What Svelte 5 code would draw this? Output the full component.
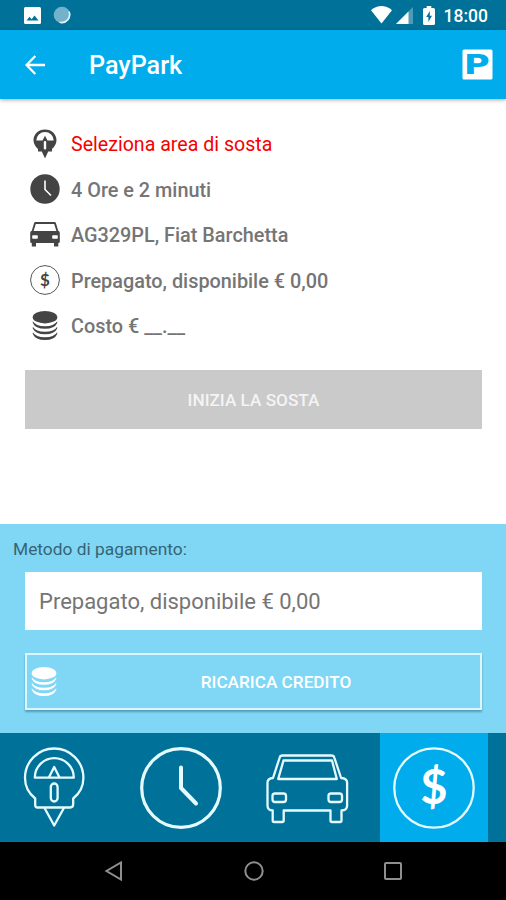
<script lang="ts">
	type Icon = 'meter' | 'clock' | 'car' | 'dollar' | 'coins';

	const rows: { icon: Icon; text: string; alert?: boolean }[] = [
		{ icon: 'meter', text: 'Seleziona area di sosta', alert: true },
		{ icon: 'clock', text: '4 Ore e 2 minuti' },
		{ icon: 'car', text: 'AG329PL, Fiat Barchetta' },
		{ icon: 'dollar', text: 'Prepagato, disponibile € 0,00' },
		{ icon: 'coins', text: 'Costo € __.__' }
	];

	const tabs: { icon: Icon; label: string }[] = [
		{ icon: 'meter', label: 'Area' },
		{ icon: 'clock', label: 'Durata' },
		{ icon: 'car', label: 'Veicolo' },
		{ icon: 'dollar', label: 'Pagamento' }
	];

	let current = $state<Icon>('dollar');
</script>

{#snippet coins()}
	<svg width="26" height="32" viewBox="0 0 26 32" aria-hidden="true">
		<ellipse cx="13" cy="7.200" rx="12.300" ry="6.200" />
		<path d="M.8 11.200q3 5 12.200 5t12.200-5v1.800q-2.600 5.800-12.200 5.800t-12.200-5.800z" />
		<path d="M.8 16.700q3 5 12.200 5t12.200-5v1.800q-2.600 5.800-12.200 5.800t-12.200-5.800z" />
		<path d="M.8 22.200q3 5 12.200 5t12.200-5v1.800q-2.600 6-12.200 6t-12.200-6z" />
	</svg>
{/snippet}

{#snippet rowIcon(name: Icon)}
	{#if name === 'meter'}
		<svg width="30" height="32" viewBox="0 0 30 32" aria-hidden="true">
			<path
				d="M15 1.500C8.400 1.500 3.500 6.300 3.500 12c0 4 2 6.600 4.500 9v2.500h3.800L15 30.500l3.200-7H22V21c2.500-2.400 4.500-5 4.500-9C26.500 6.300 21.600 1.500 15 1.500z"
			/>
			<path class="cut" d="M6.300 12.500a8.700 8.500 0 0 1 17.400 0h-6.200L15 7.800l-2.500 4.700z" />
			<rect class="cut" x="13.800" y="13" width="2.400" height="8.500" rx="1" />
		</svg>
	{:else if name === 'clock'}
		<svg width="30" height="30" viewBox="0 0 30 30" aria-hidden="true">
			<circle cx="15" cy="15" r="14.700" />
			<path class="hand" d="M15 6.500V15.500L21 21.500" />
		</svg>
	{:else if name === 'car'}
		<svg width="30" height="28" viewBox="0 0 30 28" aria-hidden="true">
			<path
				fill-rule="evenodd"
				d="M5.400 1h19.200q1 0 1.300 1l2.300 7.800q1.600.4 1.600 2.200v8.500q0 1.500-1.500 1.500v3.500H24V22H6v3.500H1.800V22Q.2 22 .2 20.500V12q0-1.800 1.600-2.200L4.100 2q.3-1 1.300-1zM5.800 3L3.600 10h22.800L24.200 3z"
			/>
			<rect class="cut" x="2.200" y="14.200" width="5.600" height="3.600" rx=".7" />
			<rect class="cut" x="22.200" y="14.200" width="5.600" height="3.600" rx=".7" />
		</svg>
	{:else if name === 'dollar'}
		<svg width="30" height="30" viewBox="0 0 30 30" aria-hidden="true">
			<circle class="ring" cx="15" cy="15" r="14.400" />
			<text x="15" y="20.800" font-size="17">$</text>
		</svg>
	{:else}
		{@render coins()}
	{/if}
{/snippet}

{#snippet tabIcon(name: Icon)}
	<svg width="84" height="84" viewBox="0 0 84 84" aria-hidden="true">
		{#if name === 'meter'}
			<path
				d="M25 61.500q-1.800-.2-1.800-2.500v-6.500C17 47.500 13 40.500 13 32A29.200 29.500 0 0 1 71.400 32c0 8.500-4 15.500-10.200 20.500V58q0 3.500-3 3.500z"
			/>
			<path d="M22.800 31.700a19.500 19.500 0 0 1 39 0z" />
			<path d="M37 31.200l5.200-10.200 5.200 10.200" />
			<rect x="38.800" y="37.500" width="6.800" height="18" rx="3.400" />
			<path d="M32.500 62l9.700 17.500L51.900 62" />
		{:else if name === 'clock'}
			<circle class="thick" cx="42" cy="42" r="39.300" />
			<path class="hands" d="M42 21.500V42L57 57.500" />
		{:else if name === 'car'}
			<path
				d="M17.500 9.500h49q2.200 0 2.800 2l6.800 20.500q6 .5 6 4.500V59.500q0 5-5.600 5V74.500q0 1.500-1.500 1.500H67q-1.500 0-1.500-1.500V64.500H18.700V74.500q0 1.500-1.500 1.500H9.200q-1.500 0-1.500-1.500V64.500q-5.200 0-5.200-5V36.500q0-4 5.500-4.500L14.700 11.500q.6-2 2.800-2z"
			/>
			<path d="M18.500 14.500h48.500l4.800 18.500H13.200z" />
			<rect x="7.500" y="47.500" width="13.500" height="8.500" rx="2.500" />
			<rect x="63.500" y="47.500" width="13.500" height="8.500" rx="2.500" />
		{:else}
			<circle cx="42" cy="42" r="39.700" />
			<text x="42" y="58" font-size="47">$</text>
		{/if}
	</svg>
{/snippet}

<div class="screen">
	<div class="status">
		<svg width="17" height="17" viewBox="0 0 17 17" aria-hidden="true">
			<rect width="17" height="17" rx="1.500" fill="#fff" />
			<path d="M2.500 13.500L5.500 9.800l2.200 2.400 2.800-3.700 4 5z" fill="#007299" />
		</svg>
		<svg class="sync" width="18" height="18" viewBox="0 0 18 18" aria-hidden="true">
			<circle cx="9" cy="9" r="8.300" fill="#73b2ca" />
			<path d="M16 5.500A8 8 0 0 1 6.500 16.300" fill="none" stroke="#dff2f8" stroke-width="1.600" />
		</svg>
		<svg class="wifi" width="21" height="18" viewBox="0 0 21 18" aria-hidden="true">
			<path d="M0 4.200Q10.500-4 21 4.200L10.500 17.500z" fill="#fff" />
		</svg>
		<svg class="signal" width="17" height="17" viewBox="0 0 17 17" aria-hidden="true">
			<path d="M17 0v17H0z" fill="#4c9cb8" />
			<path d="M12.500 4.500V17H0z" fill="#fff" />
		</svg>
		<svg class="battery" width="12" height="19" viewBox="0 0 12 19" aria-hidden="true">
			<path
				d="M3.700 0h4.600v2H10.500Q12 2 12 3.500v14q0 1.500-1.500 1.500h-9Q0 19 0 17.500v-14Q0 2 1.500 2h2.200z"
				fill="#fff"
			/>
			<path d="M6.800 5L3.200 11h2.200v5L9 9.700H6.800z" fill="#007299" />
		</svg>
		<span class="time">18:00</span>
	</div>

	<header>
		<button class="back" aria-label="Indietro">
			<svg width="20" height="20" viewBox="0 0 20 20">
				<path
					d="M10.300 1L1.500 10l8.800 9M1.500 10H20"
					fill="none"
					stroke="#fff"
					stroke-width="2.300"
				/>
			</svg>
		</button>
		<h1>PayPark</h1>
		<svg class="logo" width="31" height="31" viewBox="0 0 31 31" aria-hidden="true">
			<rect x=".5" y=".5" width="30" height="30" rx="1.500" fill="#fff" />
			<text x="1.700" y="25" textLength="26" lengthAdjust="spacingAndGlyphs">P</text>
		</svg>
	</header>

	<main>
		<ul>
			{#each rows as row}
				<li class:alert={row.alert}>
					<span class="row-icon">{@render rowIcon(row.icon)}</span>
					<span class="row-text">{row.text}</span>
				</li>
			{/each}
		</ul>
		<button class="start" disabled>INIZIA LA SOSTA</button>
	</main>

	<section>
		<h2>Metodo di pagamento:</h2>
		<div class="method">Prepagato, disponibile € 0,00</div>
		<button class="topup">
			{@render coins()}
			<span>RICARICA CREDITO</span>
		</button>
	</section>

	<div class="tabs">
		{#each tabs as tab}
			<button
				class:active={current === tab.icon}
				aria-label={tab.label}
				onclick={() => (current = tab.icon)}
			>
				{@render tabIcon(tab.icon)}
			</button>
		{/each}
	</div>

	<nav>
		<svg width="20" height="22" viewBox="0 0 20 22" aria-hidden="true">
			<path d="M17 2.500v17L2.500 11z" />
		</svg>
		<svg width="20" height="22" viewBox="0 0 20 22" aria-hidden="true">
			<circle cx="10" cy="11" r="8.700" />
		</svg>
		<svg width="20" height="22" viewBox="0 0 20 22" aria-hidden="true">
			<rect x="2" y="3" width="16" height="16" rx="1" />
		</svg>
	</nav>
</div>

<style>
	:global(body) {
		margin: 0;
	}

	.screen {
		display: flex;
		flex-direction: column;
		width: 506px;
		height: 900px;
		overflow: hidden;
		background: #fff;
		font-family: Roboto, sans-serif;
	}

	svg {
		display: block;
		flex: none;
	}

	button {
		border: none;
		padding: 0;
		font-family: inherit;
		background: none;
		cursor: pointer;
	}

	h1,
	h2,
	ul {
		margin: 0;
		padding: 0;
	}

	.status {
		display: flex;
		align-items: center;
		box-sizing: border-box;
		height: 30px;
		padding: 0 18px 0 24px;
		background: #007299;
	}

	.sync {
		margin-left: 12px;
	}

	.wifi {
		margin-left: auto;
	}

	.signal {
		margin-left: 4px;
	}

	.battery {
		margin: 0 9px 0 10px;
	}

	.time {
		color: #fff;
		font-size: 17.500px;
		font-weight: 500;
		line-height: 30px;
		padding-top: 2px;
	}

	header {
		display: flex;
		align-items: center;
		box-sizing: border-box;
		height: 69px;
		padding: 0 13px 0 25px;
		background: #00acec;
		box-shadow: 0 1px 4px rgba(0, 0, 0, 0.35);
	}

	h1 {
		margin-left: 44px;
		padding-top: 2px;
		color: #fff;
		font-size: 25.200px;
		font-weight: 500;
	}

	.logo {
		margin-left: auto;
	}

	.logo text {
		fill: #00acec;
		font-family: 'DejaVu Sans', sans-serif;
		font-size: 26px;
		font-weight: 700;
	}

	main {
		display: flex;
		flex-direction: column;
		box-sizing: border-box;
		height: 425px;
		padding: 22px 24px 0 25px;
	}

	ul {
		list-style: none;
	}

	li {
		display: flex;
		align-items: center;
		height: 45.500px;
		color: #757575;
		font-size: 19.850px;
		font-weight: 500;
		white-space: nowrap;
	}

	.alert {
		color: #f60000;
		font-size: 19.600px;
		font-weight: 400;
	}

	.row-icon {
		display: flex;
		justify-content: center;
		width: 40px;
		margin-right: 6px;
		fill: #444;
	}

	.row-text {
		padding-top: 2px;
	}

	.cut {
		fill: #fff;
	}

	.hand {
		fill: none;
		stroke: #fff;
		stroke-width: 1.600;
	}

	.ring {
		fill: none;
		stroke: #444;
		stroke-width: 0.900;
	}

	.row-icon text,
	.tabs text {
		font-family: Lato, sans-serif;
		font-weight: 700;
		text-anchor: middle;
	}

	.start {
		height: 59px;
		margin-top: 21.500px;
		background: #cacaca;
		color: #f4f4f4;
		font-size: 17.200px;
		font-weight: 500;
	}

	section {
		display: flex;
		flex-direction: column;
		box-sizing: border-box;
		height: 209px;
		padding: 13px 24px 0 25px;
		background: #80d7f5;
	}

	h2 {
		margin-left: -12px;
		color: #366474;
		font-size: 17.350px;
		font-weight: 400;
		line-height: 24px;
	}

	.method {
		height: 58px;
		margin-top: 11px;
		padding-left: 14px;
		background: #fff;
		color: #757575;
		font-size: 22px;
		line-height: 60px;
	}

	.topup {
		display: flex;
		align-items: center;
		box-sizing: border-box;
		height: 57px;
		margin-top: 23px;
		padding-left: 4px;
		border: 2px solid #dcf6ff;
		box-shadow: 0 2px 2px rgba(0, 50, 75, 0.35);
		color: #fff;
		fill: #fff;
		font-size: 17.200px;
		font-weight: 500;
	}

	.topup span {
		flex: 1;
		padding-left: 15px;
		text-align: center;
	}

	.tabs {
		display: flex;
		gap: 18px;
		height: 109px;
		background: #007299;
	}

	.tabs button {
		display: flex;
		justify-content: center;
		align-items: center;
		width: 108.600px;
		fill: none;
		stroke: #e6fbff;
		stroke-width: 2.300;
		stroke-linejoin: round;
	}

	.tabs .active {
		background: #00acec;
	}

	.tabs .thick {
		stroke-width: 3.200;
	}

	.tabs .hands {
		stroke-width: 4;
		stroke-linecap: round;
	}

	.tabs text {
		fill: #fff;
		stroke: none;
	}

	nav {
		display: flex;
		justify-content: space-between;
		align-items: center;
		box-sizing: border-box;
		height: 58px;
		padding: 0 103px 0 104px;
		background: #000;
		fill: none;
		stroke: #8f8f8f;
		stroke-width: 2;
	}
</style>
